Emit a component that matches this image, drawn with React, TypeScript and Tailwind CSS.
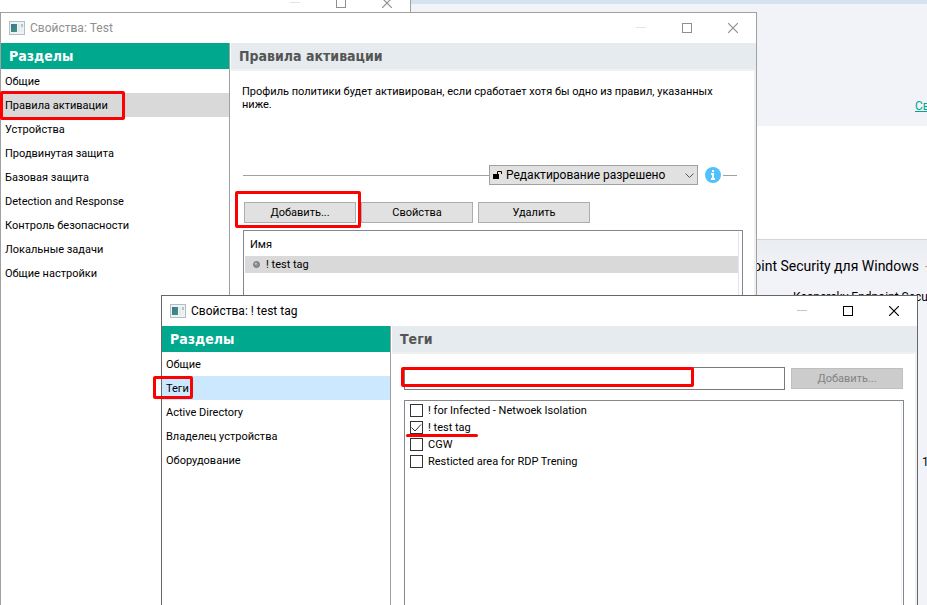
import type { ReactNode } from 'react';
import clsx from 'clsx';

const TAGS = [
  { id: 'infected', label: '! for Infected - Netwoek Isolation', checked: false },
  { id: 'test', label: '! test tag', checked: true },
  { id: 'cgw', label: 'CGW', checked: false },
  { id: 'rdp', label: 'Resticted area for RDP Trening', checked: false },
];

const PROFILE_SECTIONS = [
  'Общие',
  'Правила активации',
  'Устройства',
  'Продвинутая защита',
  'Базовая защита',
  'Detection and Response',
  'Контроль безопасности',
  'Локальные задачи',
  'Общие настройки',
];

const RULE_SECTIONS = ['Общие', 'Теги', 'Active Directory', 'Владелец устройства', 'Оборудование'];

// Red frame drawn around the element it is placed in
function Mark({ className }: { className: string }) {
  return <span aria-hidden="true" className={clsx('pointer-events-none absolute z-10 rounded-xs border-3 border-[#ff0000]', className)} />;
}

function WindowControls({ active }: { active?: boolean }) {
  return (
    <div className={clsx('flex items-center', active ? 'text-black' : 'text-[#8f8f8f]')}>
      <button aria-label="Свернуть" className="flex h-6 w-[46px] items-center justify-center">
        <svg width="10" height="10" className={active ? 'text-[#c4c4c4]' : 'text-[#e4e4e4]'} stroke="currentColor">
          <path d="M0 4.5h10" />
        </svg>
      </button>
      <button aria-label="Развернуть" className="flex h-6 w-[46px] items-center justify-center">
        <svg width="10" height="10" fill="none" stroke="currentColor">
          <rect x="0.5" y="0.5" width="9" height="9" />
        </svg>
      </button>
      <button aria-label="Закрыть" className="flex h-6 w-[46px] items-center justify-center">
        <svg width="10" height="10" fill="none" stroke="currentColor" strokeWidth="1.2">
          <path d="M0 0l10 10M10 0L0 10" />
        </svg>
      </button>
    </div>
  );
}

function AppIcon() {
  return (
    <svg width="16" height="14" viewBox="0 0 16 14" className="shrink-0">
      <defs>
        <linearGradient id="screen" x1="0" y1="0" x2="1" y2="1">
          <stop offset="0" stopColor="#3f6fa5" />
          <stop offset="1" stopColor="#3d9a6b" />
        </linearGradient>
      </defs>
      <rect x="0.5" y="0.5" width="15" height="13" fill="#eef3f5" stroke="#b4bcc4" />
      <rect x="2" y="3" width="6" height="8" fill="url(#screen)" />
      <rect x="9" y="3" width="2" height="8" fill="#e3e9ee" />
      <rect x="12" y="3" width="2" height="3" fill="#a5cbc0" />
      <rect x="12" y="6" width="2" height="5" fill="#e8eef1" />
    </svg>
  );
}

type DialogProps = {
  title: string;
  heading: string;
  sections: string[];
  current: string;
  markClass: string;
  active?: boolean;
  className: string;
  children: ReactNode;
};

function DialogWindow({ title, heading, sections, current, markClass, active, className, children }: DialogProps) {
  return (
    <section
      className={clsx(
        'absolute bottom-0 flex w-[757px] flex-col border border-b-0 bg-white',
        active ? 'border-[#66666a]' : 'border-[#a0a0a0]',
        className,
      )}
    >
      <header className="flex h-[30px] shrink-0 items-center justify-between pl-2">
        <div className="flex items-center gap-[5px]">
          <AppIcon />
          <h1 className={clsx('text-xs', active ? 'text-black' : 'text-[#8f8f8f]')}>{title}</h1>
        </div>
        <WindowControls active={active} />
      </header>
      <div className="flex min-h-0 flex-1">
        <nav className="w-[229px] shrink-0 border-r border-[#a0a0a0]">
          <h2 className="h-[26px] bg-[#00a88e] pl-2 font-['DejaVu_Sans_Condensed',sans-serif] text-sm leading-[26px] font-bold text-white">
            Разделы
          </h2>
          {sections.map((name) => (
            <button
              key={name}
              className={clsx(
                'relative block h-6 w-full pl-1 text-left',
                name === current && (active ? 'bg-[#cce8ff]' : 'bg-[#d9d9d9]'),
              )}
            >
              {name}
              {name === current && <Mark className={markClass} />}
            </button>
          ))}
        </nav>
        <div className="ml-px flex min-w-0 flex-1 flex-col border-r-2 border-[#f0f0f0]">
          <h2 className="-mr-0.5 h-7 shrink-0 border-b-2 border-[#f0f0f0] bg-[#e5ebee] pl-2 font-['DejaVu_Sans_Condensed',sans-serif] text-sm leading-[26px] font-bold text-[#555555]">
            {heading}
          </h2>
          {children}
        </div>
      </div>
    </section>
  );
}

function ToolButton({ children, disabled }: { children: ReactNode; disabled?: boolean }) {
  return (
    <button
      disabled={disabled}
      className={clsx(
        'block h-[21px] w-28 shrink-0 border',
        disabled ? 'border-[#bfbfbf] bg-[#cccccc] text-[#838383]' : 'border-[#adadad] bg-[#e1e1e1]',
      )}
    >
      {children}
    </button>
  );
}

function EditLock() {
  return (
    <div className="mt-[54px] flex items-center">
      <hr className="flex-1 border-[#a0a0a0]" />
      <div className="relative">
        <svg width="10" height="10" className="absolute top-[5px] left-1">
          <path d="M0 4h6v5H0z" fill="#000" />
          <path d="M4.5 4V1.5h4V4" fill="none" stroke="#000" />
        </svg>
        <select
          aria-label="Редактирование"
          className="block h-5 w-[209px] appearance-none border border-[#a0a0a0] bg-[#e1e1e1] pl-4 text-xs leading-[18px]"
        >
          <option>Редактирование разрешено</option>
        </select>
        <svg width="9" height="6" className="pointer-events-none absolute top-2 right-1" fill="none" stroke="#555">
          <path d="M0.5 0.5l4 4 4-4" />
        </svg>
      </div>
      <svg width="16" height="16" viewBox="0 0 16 16" className="ml-[7px]">
        <circle cx="8" cy="8" r="8" fill="#4fc1fb" />
        <path d="M7 3h2v2H7zM6 6h3v5h1v2H6v-2h1V8H6z" fill="#fff" />
      </svg>
      <hr className="ml-0.5 w-3.5 border-[#a0a0a0]" />
    </div>
  );
}

function RulesPanel() {
  return (
    <div className="flex min-h-0 flex-1 flex-col pt-3.5 pr-[11px] pl-3">
      <p className="-ml-px pr-4 leading-[13px]">
        Профиль политики будет активирован, если сработает хотя бы одно из правил, указанных ниже.
      </p>
      <div className="pr-1.5">
        <EditLock />
      </div>
      <div className="mt-[17px] ml-px flex gap-[5px]">
        <div className="relative">
          <ToolButton>Добавить...</ToolButton>
          <Mark className="-top-[11px] -right-[5px] -bottom-[5px] -left-[9px]" />
        </div>
        <ToolButton>Свойства</ToolButton>
        <ToolButton>Удалить</ToolButton>
      </div>
      <div className="mt-[7px] min-h-0 flex-1 border border-b-0 border-[#828790] px-px pt-px">
        <div className="mr-0.5 h-full border-r border-[#dfe7f2]">
          <table className="w-full text-left">
            <thead>
              <tr className="h-6">
                <th className="pl-[5px] font-normal">Имя</th>
              </tr>
            </thead>
            <tbody>
              <tr className="h-[17px] bg-[#d9d9d9]">
                <td className="pl-2">
                  <span className="flex items-center gap-1.5">
                    <svg width="7" height="7" viewBox="0 0 7 7">
                      <circle cx="3.5" cy="3.5" r="3" fill="#8a8f94" stroke="#6f7579" />
                      <circle cx="2.8" cy="2.6" r="1.2" fill="#b9bec2" />
                    </svg>
                    ! test tag
                  </span>
                </td>
              </tr>
            </tbody>
          </table>
        </div>
      </div>
    </div>
  );
}

function TagsPanel() {
  return (
    <div className="flex min-h-0 flex-1 flex-col pt-[13px] pr-[11px] pl-3">
      <div className="flex items-center gap-1.5 pr-px">
        <div className="relative flex-1">
          <input type="text" aria-label="Новый тег" className="block h-[23px] w-full border border-[#7a7a7a] bg-white px-1" />
          <Mark className="top-0 right-[91px] bottom-[3px] -left-[3px]" />
        </div>
        <ToolButton disabled>Добавить...</ToolButton>
      </div>
      <div className="relative mt-2.5 min-h-0 flex-1 border border-b-0 border-[#828790] py-px pr-px pl-[5px]">
        <ul className="h-full border-r border-[#edf3fa]">
          {TAGS.map((tag) => (
            <li key={tag.id} className="relative flex h-[17px] items-center gap-[5px]">
              <span className="relative flex size-[13px]">
                <input
                  id={tag.id}
                  type="checkbox"
                  defaultChecked={tag.checked}
                  className="peer size-[13px] appearance-none border border-[#333333] bg-white"
                />
                <svg
                  width="13"
                  height="13"
                  className="pointer-events-none absolute inset-0 hidden peer-checked:block"
                  fill="none"
                  stroke="#333"
                >
                  <path d="M1.5 6.5l3.5 3.5 6-6.5" />
                </svg>
              </span>
              <label htmlFor={tag.id}>{tag.label}</label>
              {tag.checked && (
                <span aria-hidden="true" className="absolute -bottom-px -left-1 h-[3px] w-[72px] rounded-full bg-[#ff0000]" />
              )}
            </li>
          ))}
        </ul>
      </div>
    </div>
  );
}

// Administration console that stays behind the dialogs
function Console() {
  return (
    <main className="flex h-full flex-col overflow-hidden bg-[#f2f3f9] whitespace-nowrap">
      <div className="h-1 shrink-0 bg-[#d5e3f0]" />
      <div className="flex h-[122px] shrink-0 items-end pb-3 pl-[915px]">
        <a href="#" className="text-xs text-[#00a88e] underline">
          Св
        </a>
      </div>
      <div className="h-[113px] shrink-0 bg-white" />
      <div className="flex-1 border-t border-[#cfd6da] bg-linear-to-b from-[#eaedf1] to-[#f2f3f9] to-10% pt-4">
        <h2 className="flex items-center justify-end gap-1.5 text-sm">
          Kaspersky Endpoint Security для Windows
          <span className="h-px w-0.5 bg-[#e8a23d]" />
        </h2>
        <p className="mt-[13px] pl-[793px] text-xs">Kaspersky Endpoint Security</p>
        <p className="mt-[149px] pl-[922px] text-xs">1</p>
      </div>
    </main>
  );
}

export default function App() {
  return (
    <div className="relative h-screen overflow-hidden font-[Roboto,sans-serif] text-[11px] leading-[17px] text-black">
      <Console />

      <section className="absolute top-0 left-0 flex h-3 w-[411px] items-center justify-end border-r border-[#a0a0a0] bg-white">
        <div className="mb-1.5">
          <WindowControls />
        </div>
      </section>

      <DialogWindow
        title="Свойства: Test"
        heading="Правила активации"
        sections={PROFILE_SECTIONS}
        current="Правила активации"
        markClass="-top-0.5 -bottom-[3px] -left-px w-[125px]"
        className="top-3 left-0"
      >
        <RulesPanel />
      </DialogWindow>

      <DialogWindow
        title="Свойства: ! test tag"
        heading="Теги"
        sections={RULE_SECTIONS}
        current="Теги"
        markClass="top-0 bottom-px -left-[9px] w-10"
        className="top-[295px] left-[161px]"
        active
      >
        <TagsPanel />
      </DialogWindow>
    </div>
  );
}
